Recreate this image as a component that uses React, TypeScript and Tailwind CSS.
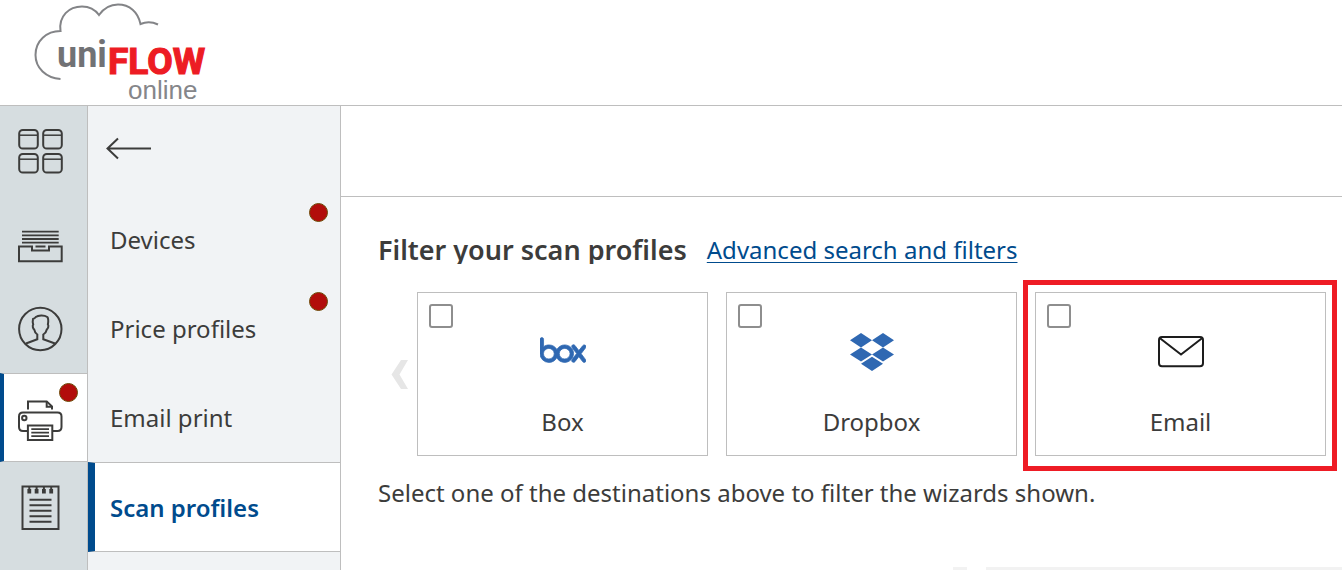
import { useState, type ReactNode } from "react";
import { SiBox } from "react-icons/si";

const stroke = { fill: "none", stroke: "currentColor", strokeWidth: 2 } as const;

function Logo() {
  return (
    <svg className="h-[105px] w-[210px]" viewBox="0 0 210 105" role="img" aria-label="uniFLOW online">
      <path
        d="M60.500 79C46 78 35.500 68 35.500 55C35.500 41 46.500 31 60.500 31C58.500 16 69 6.500 82 6.500C89.500 6.500 95 9.500 99 15C104 8 110 4.500 118 4.500C129.500 4.500 138 12 140.500 24C146 21.500 152 21.500 158 24.500"
        fill="none"
        stroke="#838487"
        strokeWidth="2"
      />
      <text x="57" y="67" fontSize="36" fontWeight="700" fill="#717275" fontFamily="Roboto, sans-serif">
        uni
      </text>
      <text x="108" y="74" fontSize="37" fontWeight="700" fill="#ed1c24" stroke="#ed1c24" strokeWidth="1.2" fontFamily="Roboto, sans-serif">
        FLOW
      </text>
      <text x="128" y="99" fontSize="26" fill="#85868a" fontFamily="'Liberation Sans', sans-serif">
        online
      </text>
    </svg>
  );
}

function DashboardIcon() {
  return (
    <svg className="size-[46px]" viewBox="0 0 46 46" {...stroke}>
      {[1.2, 25.2].map((x) =>
        [2, 26].map((y) => (
          <g key={`${x}-${y}`}>
            <rect x={x} y={y} width="18.600" height="18.600" rx="3.600" />
            <path d={`M${x} ${y + 5.2}h18.6`} strokeWidth="1.500" />
          </g>
        )),
      )}
    </svg>
  );
}

function TrayIcon() {
  return (
    <svg className="size-[46px]" viewBox="0 0 46 46" {...stroke}>
      <path d="M4 14.700H40.700M4 18.300H40.700M4 22H40.700M4 25.700H40.700M17.500 29.500H27.500" strokeWidth="1.800" />
      <path d="M1 29.400H14V33.400H31V29.400H43.700V44.300H1Z" />
    </svg>
  );
}

function UserIcon() {
  return (
    <svg className="size-[46px]" viewBox="0 0 46 46" {...stroke}>
      <circle cx="22.300" cy="23" r="21.200" />
      <path d="M8 37.500L19.300 33.200V28.500C17.500 27.500 16.700 26 16.200 23.500C15 22.500 14.200 20 15.200 18.500C14.700 16.500 14.600 14.500 15 13C16 12.600 17 12.200 17.800 11C20 9.300 26 8.700 29.300 11C30.600 12.500 30.400 15.500 29.900 18.500C31 20 30 22.500 28.800 23.500C28.300 26 27 27.500 25.300 28.500V33.200L37 37.500" />
    </svg>
  );
}

function PrinterIcon() {
  return (
    <svg className="size-[46px]" viewBox="0 0 46 46" {...stroke}>
      <path d="M10 14.500V6.400H28.700L34 11.500V14.500" />
      <path d="M28.700 6.400V11.700H34" />
      <path d="M9.700 36H5C2.500 36 1 34.500 1 32V21.500C1 19 2.500 17.400 5 17.400H39.500C42 17.400 43.500 19 43.500 21.500V32C43.500 34.500 42 36 39.500 36H34.300" />
      <circle cx="6.300" cy="23" r="2.200" />
      <path d="M9.900 30.500H34.300V45H9.900Z" />
      <path d="M13.300 34.200H31M13.300 37.700H31M13.300 41.200H31" strokeWidth="1.700" />
    </svg>
  );
}

function NotepadIcon() {
  return (
    <svg className="size-[46px]" viewBox="0 0 46 46" {...stroke}>
      <path d="M4.500 2.600H40.500V45H4.500Z" />
      <path d="M11.300 5V9.500M18.600 5V9.500M25.900 5V9.500M33.200 5V9.500" strokeWidth="3.800" />
      <path d="M11.300 2V6M18.600 2V6M25.900 2V6M33.200 2V6" strokeWidth="2" />
      <path d="M11.500 15.700H33.500M11.500 21.200H33.500M11.500 26.700H33.500M11.500 32.200H33.500M11.500 37.700H33.500" />
    </svg>
  );
}

function DropboxIcon() {
  return (
    <svg className="h-[38px] w-11" viewBox="0 0 44 38" fill="#2f68b2">
      <path d="M11 0L22 7.200L11 14.400L0 7.200ZM33 0L44 7.200L33 14.400L22 7.200ZM11 14.400L22 21.600L11 28.600L0 21.600ZM33 14.400L44 21.600L33 28.600L22 21.600ZM22 23.800L33 30.800L22 38L11 30.800Z" />
    </svg>
  );
}

function MailIcon() {
  return (
    <svg className="h-8 w-[46px]" viewBox="0 0 46 32" fill="none" stroke="#1d1d1d" strokeWidth="2">
      <rect x="1" y="1" width="44" height="29.300" rx="3" />
      <path d="M2 2.300L23 18.600L44 2.300" />
    </svg>
  );
}

function Dot({ className }: { className: string }) {
  return <span className={`absolute size-[19px] rounded-full border border-[#6f4a08] bg-[#b20d0b] ${className}`} />;
}

const rail: { label: string; icon: ReactNode; active?: boolean }[] = [
  { label: "Dashboard", icon: <DashboardIcon /> },
  { label: "Job lists", icon: <TrayIcon /> },
  { label: "Users", icon: <UserIcon /> },
  { label: "Printers", icon: <PrinterIcon />, active: true },
  { label: "Reports", icon: <NotepadIcon /> },
];

const menu = [
  { label: "Devices", dot: true },
  { label: "Price profiles", dot: true },
  { label: "Email print" },
  { label: "Scan profiles", active: true },
];

const destinations: { name: string; icon: ReactNode; highlighted?: boolean }[] = [
  { name: "Box", icon: <SiBox className="mb-1 size-[46px] text-[#2f68b2]" stroke="#2f68b2" strokeWidth="0.4" /> },
  { name: "Dropbox", icon: <DropboxIcon /> },
  { name: "Email", icon: <MailIcon />, highlighted: true },
];

export default function App() {
  const [selected, setSelected] = useState<string[]>([]);
  const toggle = (name: string) =>
    setSelected((list) => (list.includes(name) ? list.filter((n) => n !== name) : [...list, name]));

  return (
    <div className="flex h-screen flex-col overflow-hidden bg-white font-['Noto_Sans','Open_Sans',sans-serif] text-2xl text-[#3c3c3b]">
      <header className="shrink-0 border-b border-[#bebebe]">
        <Logo />
      </header>

      <div className="flex min-h-0 flex-1">
        <nav aria-label="Main" className="w-[88px] shrink-0 overflow-hidden border-r border-[#bebebe] bg-[#d6dde0]">
          {rail.map((item) => (
            <a
              key={item.label}
              href="#"
              aria-label={item.label}
              className={
                item.active
                  ? "relative flex h-[89px] items-start border-y border-l-4 border-y-[#bebebe] border-l-[#004b8d] bg-white pt-[21px] pl-3.5"
                  : "flex h-[89px] items-start pt-[22px] pl-[18px]"
              }
            >
              {item.icon}
              {item.active && <Dot className="top-[9px] left-[55px]" />}
            </a>
          ))}
        </nav>

        <nav aria-label="Printing" className="w-[253px] shrink-0 overflow-hidden border-r border-[#bebebe] bg-[#f1f3f5]">
          <button type="button" aria-label="Back" className="flex h-[89px] w-full items-center pb-1 pl-[18px]">
            <svg className="h-6 w-[46px]" viewBox="0 0 46 24" {...stroke}>
              <path d="M1.500 11.500H45M12 1.500L1.500 11.500L12 21.500" />
            </svg>
          </button>
          {menu.map((item) => (
            <a
              key={item.label}
              href="#"
              className={
                item.active
                  ? "flex h-[90px] items-center border-y border-l-[7px] border-y-[#bebebe] border-l-[#004b8d] bg-white pt-px pl-[15px] font-semibold text-[#004b8d]"
                  : "relative flex h-[89px] items-center pl-[22px]"
              }
            >
              {item.label}
              {item.dot && <Dot className="top-2 right-3" />}
            </a>
          ))}
        </nav>

        <main className="flex min-w-0 flex-1 flex-col">
          <div className="h-[91px] shrink-0 border-b border-[#bebebe]" />

          <div className="flex h-[67px] shrink-0 items-end gap-5 pl-[37px]">
            <h1 className="h-8 overflow-hidden text-[27px] leading-9 font-semibold whitespace-nowrap">
              Filter your scan profiles
            </h1>
            <a
              href="#"
              className="h-8 leading-9 whitespace-nowrap text-[#004b8d] underline decoration-1 underline-offset-3"
            >
              Advanced search and filters
            </a>
          </div>

          <section aria-label="Destinations" className="mt-7 flex shrink-0 items-center gap-[9px] pr-4 pl-[50px]">
            <button type="button" aria-label="Previous destinations" className="shrink-0">
              <svg className="h-[29px] w-[17px]" viewBox="0 0 17 29" fill="#e6e6e6">
                <path d="M10 0H17L8.500 14.500L17 29H10L0.500 14.500Z" />
              </svg>
            </button>
            <div className="grid flex-1 grid-cols-3 gap-[18px]">
              {destinations.map((item) => (
                <label
                  key={item.name}
                  className="relative flex h-[164px] flex-col items-center border border-[#bebebe] pt-9"
                >
                  <input
                    type="checkbox"
                    checked={selected.includes(item.name)}
                    onChange={() => toggle(item.name)}
                    className="absolute top-[11px] left-[11px] size-6 appearance-none rounded-[3px] border-2 border-[#8e8e8e] bg-white checked:bg-[#004b8d]"
                  />
                  <span className="flex h-[45px] items-center">{item.icon}</span>
                  <span className="mt-8 leading-8">{item.name}</span>
                  {item.highlighted && (
                    <span className="pointer-events-none absolute -top-[13px] -right-3 -bottom-4 -left-[13px] border-[5px] border-[#ee1c25]" />
                  )}
                </label>
              ))}
            </div>
          </section>

          <p className="mt-[19px] shrink-0 pl-[37px] leading-9">
            Select one of the destinations above to filter the wizards shown.
          </p>

          <div className="mt-auto flex h-[3px] justify-end gap-[19px]">
            <div className="w-3.5 bg-[#f2f2f2]" />
            <div className="w-[356px] bg-[#f2f2f2]" />
          </div>
        </main>
      </div>
    </div>
  );
}
